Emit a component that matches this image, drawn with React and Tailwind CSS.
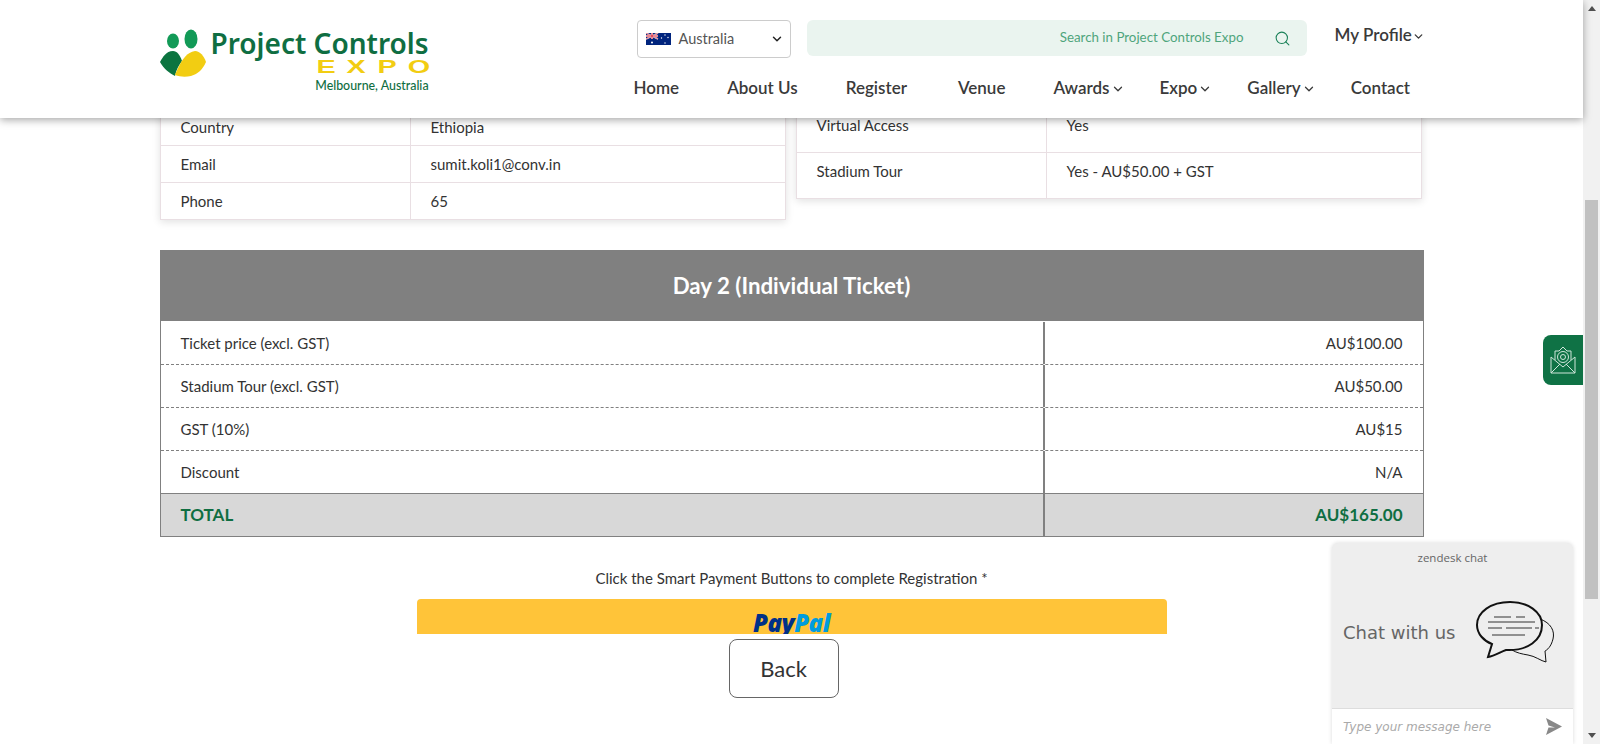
import { ChevronDown, Search } from 'lucide-react'

const leftRows = [
  ['Country', 'Ethiopia'],
  ['Email', 'sumit.koli1@conv.in'],
  ['Phone', '65'],
]

const rightRows = [
  ['Virtual Access', 'Yes'],
  ['Stadium Tour', 'Yes - AU$50.00 + GST'],
]

const priceRows = [
  ['Ticket price (excl. GST)', 'AU$100.00'],
  ['Stadium Tour (excl. GST)', 'AU$50.00'],
  ['GST (10%)', 'AU$15'],
  ['Discount', 'N/A'],
]

const navItems = [
  { label: 'Home' },
  { label: 'About Us' },
  { label: 'Register', extra: 'mr-[3px]' },
  { label: 'Venue' },
  { label: 'Awards', extra: '-mr-[13px]', menu: true },
  { label: 'Expo', extra: '-mr-[13px]', menu: true },
  { label: 'Gallery', extra: '-mr-[13px]', menu: true },
  { label: 'Contact' },
]

function LogoMark() {
  return (
    <svg className="w-[50px] h-[52px] shrink-0" viewBox="158 28 50 52">
      <ellipse cx="173" cy="41" rx="6" ry="7.5" fill="#129a57" />
      <ellipse cx="191" cy="39" rx="6.5" ry="9.5" fill="#129a57" />
      <path d="M173 51 C166 51 163 57 160 62 C164 69 169 73 175 76 C176 70 179 65 182 61 C180 55 177 51 173 51Z" fill="#0b7440" />
      <path d="M195 51 C187 52 182 60 179 66 C177 70 176 72 175 75 C180 77 186 77 191 76 C198 74 203 69 206 62 C204 56 200 51 195 51Z" fill="#f2cd12" />
    </svg>
  )
}

function Flag() {
  return (
    <svg className="w-[25px] h-[12px] shrink-0" viewBox="0 0 25 12">
      <rect width="25" height="12" fill="#00247d" />
      <path d="M0 0 L12 6 M12 0 L0 6" stroke="#fff" strokeWidth="1.4" />
      <path d="M0 0 L12 6 M12 0 L0 6" stroke="#cf142b" strokeWidth="0.6" />
      <path d="M6 0 V6 M0 3 H12" stroke="#fff" strokeWidth="2" />
      <path d="M6 0 V6 M0 3 H12" stroke="#cf142b" strokeWidth="1" />
      <circle cx="6" cy="9.5" r="1" fill="#fff" />
      <circle cx="19" cy="2" r="0.7" fill="#fff" />
      <circle cx="15.5" cy="5" r="0.7" fill="#fff" />
      <circle cx="22" cy="4.5" r="0.7" fill="#fff" />
      <circle cx="19" cy="10" r="0.7" fill="#fff" />
    </svg>
  )
}

function Header() {
  return (
    <header className="relative z-20 h-[118px] bg-white shadow-[0_2px_8px_rgba(0,0,0,0.35)]">
      <div className="w-[1264px] mx-auto flex justify-between">
        {/* Logo */}
        <div className="flex items-start pt-[28px] -ml-[2px]">
          <LogoMark />
          <div className="ml-[3px] flex flex-col items-end">
            <span className="font-['Noto_Sans'] font-semibold text-[28px] leading-[30px] text-[#0f6e42] whitespace-nowrap">Project Controls</span>
            <span className="w-[106px] mr-[3px] mt-[1px] flex justify-between text-[#f2cd12] text-[18px] leading-[16px] font-bold font-['Liberation_Sans']">
              <span className="inline-block scale-x-[1.6]">E</span>
              <span className="inline-block scale-x-[1.6]">X</span>
              <span className="inline-block scale-x-[1.6]">P</span>
              <span className="inline-block scale-x-[1.6]">O</span>
            </span>
            <span className="mt-[3px] text-[12.4px] leading-[15px] font-medium text-[#0f6e42] whitespace-nowrap">Melbourne, Australia</span>
          </div>
        </div>

        {/* Top right */}
        <div className="w-[787px]">
          <div className="flex items-start pt-[20px]">
            <div className="w-[154px] h-[38px] shrink-0 flex items-center border border-[#ccc] rounded pl-[8px] pr-[6px] pb-[1px] text-[14.5px] text-[#555]">
              <Flag />
              <span className="ml-[8px] flex-1">Australia</span>
              <ChevronDown className="w-[14px] h-[14px] text-[#222]" strokeWidth={2.5} />
            </div>
            <div className="ml-[16px] w-[500px] h-[36px] shrink-0 bg-[#eaf4ef] rounded-md flex items-center justify-end pr-[16px] text-[13.33px] text-[#4fa57c]">
              <span>Search in Project Controls Expo</span>
              <Search className="ml-[30px] w-[17px] h-[17px] text-[#1a8058]" strokeWidth={1.5} />
            </div>
            <div className="ml-[28px] flex items-center h-[30px] text-[17px] font-semibold text-[#3a3a3a] whitespace-nowrap">
              My Profile<ChevronDown className="w-[13px] h-[13px] mt-[2px]" strokeWidth={2.5} />
            </div>
          </div>
          <nav className="flex -ml-[3px] mt-[18px] gap-[48px] text-[17px] leading-[24px] font-semibold text-[#3a3a3a] whitespace-nowrap">
            {navItems.map((item) => (
              <span key={item.label} className={`flex items-center ${item.extra ?? ''}`}>
                {item.label}
                {item.menu && <ChevronDown className="ml-[1px] w-[14px] h-[14px] mt-[2px]" strokeWidth={2.2} />}
              </span>
            ))}
          </nav>
        </div>
      </div>
    </header>
  )
}

function InfoTable({ rows, rowClass, className }) {
  return (
    <div className={`border border-[#e9dfe3] shadow-[0_2px_8px_rgba(0,0,0,0.12)] ${className}`}>
      {rows.map(([label, value]) => (
        <div key={label} className={`flex items-stretch leading-[36px] border-b border-[#e9dfe3] last:border-b-0 ${rowClass}`}>
          <div className="w-[250px] pl-[20px] border-r border-[#e9dfe3]">{label}</div>
          <div className="pl-[20px]">{value}</div>
        </div>
      ))}
    </div>
  )
}

function PriceTable() {
  return (
    <div className="mt-[30px] border-x border-b border-[#808080]">
      <div className="h-[71px] -mx-px bg-[#808080] flex items-center justify-center text-white text-[22.3px] font-bold">
        Day 2 (Individual Ticket)
      </div>
      {priceRows.map(([label, value], i) => (
        <div key={label} className={`flex items-center border-b border-[#808080] ${i === 0 ? 'h-[44px] pt-[1px]' : 'h-[43px]'} ${i < 3 ? 'border-dashed' : ''}`}>
          <div className="w-[882px] h-full flex items-center pl-[20px]">{label}</div>
          <div className="flex-1 h-full flex items-center justify-end pr-[20px] border-l-2 border-[#808080]">{value}</div>
        </div>
      ))}
      <div className="h-[42px] flex items-center bg-[#d8d8d8] text-[#0f6e42] text-[17px] font-bold">
        <div className="w-[882px] h-full flex items-center pl-[20px]">TOTAL</div>
        <div className="flex-1 h-full flex items-center justify-end pr-[20px] border-l-2 border-[#808080]">AU$165.00</div>
      </div>
    </div>
  )
}

function ChatBubbles() {
  return (
    <svg className="w-[82px] h-[64px]" viewBox="0 0 82 64" fill="none" stroke="#111">
      <path d="M65 18 C76 22 80 30 78 38 C76 46 72 49 70 50 L71 61 C66 60 60 55 53 54 C47 53 42 52 37 49" strokeWidth="1" />
      <path d="M35 1 C16 1 2 11 2 24 C2 33 9 40 17 43 L13 56 C20 55 25 51 31 49 C53 50 67 39 67 24 C67 11 53 1 35 1Z" fill="#eee" strokeWidth="2" />
      <g stroke="#333" strokeWidth="1">
        <path d="M19 16 H36 M41 16 H50" />
        <path d="M13 21 H60" />
        <path d="M13 27 H27 M31 27 H57 M60 27 H64" />
        <path d="M17 34 H50" />
      </g>
    </svg>
  )
}

function ChatWidget() {
  return (
    <div className="absolute right-[10px] bottom-0 w-[241px] h-[201px] rounded-t-md bg-[#eee] shadow-[0_0_4px_rgba(0,0,0,0.15)] flex flex-col font-['DejaVu_Sans'] text-[#666]">
      <div className="h-[30px] flex items-center justify-center text-[11.5px] font-['Open_Sans']">zendesk chat</div>
      <div className="flex-1 flex items-start pl-[11px] pt-[28px]">
        <span className="text-[18px] leading-[64px] whitespace-nowrap">Chat with us</span>
        <span className="ml-[20px]"><ChatBubbles /></span>
      </div>
      <div className="h-[36px] bg-white border-t border-[#ddd] flex items-center justify-between pl-[11px] pr-[11px] text-[12px] italic text-[#aaa]">
        <span>Type your message here</span>
        <svg className="w-[17px] h-[17px]" viewBox="0 0 17 17"><path d="M1 0 L17 8.5 L1 17 L3.5 9.5 H10 L3.5 7.5Z" fill="#888" /></svg>
      </div>
    </div>
  )
}

function MailTab() {
  return (
    <div className="absolute right-0 top-[335px] w-[40px] h-[50px] rounded-l-lg bg-[#0f7245] flex items-center justify-center">
      <svg className="w-[26px] h-[28px]" viewBox="0 0 26 28" fill="none" stroke="#cfe5da" strokeWidth="1">
        <path d="M1 11 V27 H25 V11" />
        <path d="M1 27 L10 18 M25 27 L16 18 M1 11 L13 21 L25 11" />
        <path d="M5 14 V5 H9 L13 1 L17 5 H21 V14" />
        <circle cx="13" cy="11" r="5.5" />
        <circle cx="13" cy="11" r="2.5" />
      </svg>
    </div>
  )
}

function Scrollbar() {
  return (
    <div className="w-[17px] shrink-0 h-full bg-[#f1f1f1] flex flex-col items-center relative">
      <span className="mt-[6px] w-0 h-0 border-x-[4px] border-x-transparent border-b-[5px] border-b-[#505050]" />
      <div className="absolute top-[200px] left-[2px] w-[13px] h-[399px] bg-[#c1c1c1]" />
      <span className="mt-auto mb-[6px] w-0 h-0 border-x-[4px] border-x-transparent border-t-[5px] border-t-[#505050]" />
    </div>
  )
}

export default function App() {
  return (
    <div className="flex h-[744px] overflow-hidden bg-white font-['Lato',sans-serif] text-[15px] text-[#333]">
      <div className="relative flex-1 min-w-0">
        <Header />

        <main className="w-[1264px] mx-auto">
          {/* Attendee and add-on tables, page is scrolled so tops sit under the header */}
          <div className="flex justify-between items-start pr-[2px]">
            <InfoTable rows={leftRows} className="w-[626px] -mt-[10px]" rowClass="h-[37px] last:h-[36px]" />
            <InfoTable rows={rightRows} className="w-[626px] -mt-[12px]" rowClass="h-[46px] last:h-[45px]" />
          </div>

          <PriceTable />

          <p className="mt-[31px] text-center text-[15px] leading-[20px]">Click the Smart Payment Buttons to complete Registration *</p>
          <div className="mt-[11px] mx-auto w-[750px] h-[35px] overflow-hidden rounded-t bg-[#ffc439] text-center pt-[10px]">
            <span className="font-['Open_Sans'] font-extrabold italic text-[24px] leading-[28px] tracking-[-0.5px]">
              <span className="text-[#003087]">Pay</span><span className="text-[#009cde]">Pal</span>
            </span>
          </div>
          <div className="mt-[5px] flex justify-center pr-[16px]">
            <button className="w-[110px] h-[59px] rounded-lg border border-[#666] bg-white text-[22px]">Back</button>
          </div>
        </main>

        <MailTab />
        <ChatWidget />
      </div>
      <Scrollbar />
    </div>
  )
}
